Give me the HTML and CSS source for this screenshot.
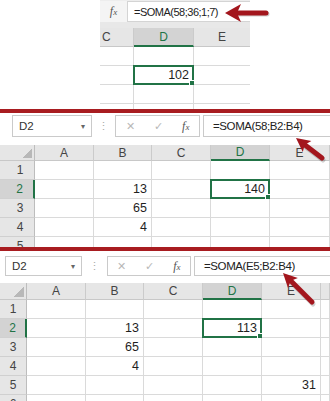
FILE: index.html
```html
<!DOCTYPE html>
<html lang="pt">
<head>
    <meta charset="UTF-8">
    <title>SOMA no Excel</title>
    <link rel="stylesheet" href="styles.css">
</head>
<body>
<div class="shot shot-one">
    <div class="mini">
        <div class="fbar">
            <div class="fx-box"><span class="fx">f<small>x</small></span></div>
            <div class="finput">=SOMA(58;36;1;7)</div>
        </div>
        <div class="mini-grid">
            <div class="hd">C</div>
            <div class="hd sel">D</div>
            <div class="hd last">E</div>
            <div class="c"></div><div class="c"></div><div class="c last"></div>
            <div class="c"></div><div class="c num active">102</div><div class="c last"></div>
            <div class="c"></div><div class="c"></div><div class="c last"></div>
            <div class="c"></div><div class="c"></div><div class="c last"></div>
        </div>
    </div>
    <svg class="arrow" viewBox="0 0 330 109" width="330" height="109">
        <line x1="238" y1="14" x2="267" y2="14" class="shade"/>
        <line x1="236" y1="13" x2="266" y2="13"/>
        <polygon points="225,13 241,4 237,13 241,22"/>
    </svg>
</div>
<div class="rule"></div>
<div class="shot shot-two">
    <div class="toolbar">
        <div class="namebox"><span>D2</span><span class="drop">&#9662;</span></div>
        <div class="dots">&#8942;</div>
        <div class="btns">
            <span class="x">&#10005;</span>
            <span class="ok">&#10003;</span>
            <span class="fx">f<small>x</small></span>
        </div>
        <div class="finput">=SOMA(58;B2:B4)</div>
    </div>
    <div class="sheet">
        <div class="corner"></div><div class="hd">A</div><div class="hd">B</div><div class="hd">C</div><div class="hd sel">D</div><div class="hd">E</div>
        <div class="rh">1</div><div class="c"></div><div class="c"></div><div class="c"></div><div class="c"></div><div class="c"></div>
        <div class="rh sel">2</div><div class="c"></div><div class="c num">13</div><div class="c"></div><div class="c num active">140</div><div class="c"></div>
        <div class="rh">3</div><div class="c"></div><div class="c num">65</div><div class="c"></div><div class="c"></div><div class="c"></div>
        <div class="rh">4</div><div class="c"></div><div class="c num">4</div><div class="c"></div><div class="c"></div><div class="c"></div>
        <div class="rh">5</div><div class="c"></div><div class="c"></div><div class="c"></div><div class="c"></div><div class="c"></div>
    </div>
    <svg class="arrow" viewBox="0 0 330 134" width="330" height="134">
        <line x1="306" y1="34" x2="323" y2="47" class="shade"/>
        <line x1="305" y1="32" x2="322" y2="45"/>
        <polygon points="296,25 311.4,28 304.7,31.7 302.8,39"/>
    </svg>
</div>
<div class="rule"></div>
<div class="shot shot-three">
    <div class="toolbar">
        <div class="namebox"><span>D2</span><span class="drop">&#9662;</span></div>
        <div class="dots">&#8942;</div>
        <div class="btns">
            <span class="x">&#10005;</span>
            <span class="ok">&#10003;</span>
            <span class="fx">f<small>x</small></span>
        </div>
        <div class="finput">=SOMA(E5;B2:B4)</div>
    </div>
    <div class="sheet">
        <div class="corner"></div><div class="hd">A</div><div class="hd">B</div><div class="hd">C</div><div class="hd sel">D</div><div class="hd">E</div><div class="hd"></div>
        <div class="rh">1</div><div class="c"></div><div class="c"></div><div class="c"></div><div class="c"></div><div class="c"></div><div class="c"></div>
        <div class="rh sel">2</div><div class="c"></div><div class="c num">13</div><div class="c"></div><div class="c num active">113</div><div class="c"></div><div class="c"></div>
        <div class="rh">3</div><div class="c"></div><div class="c num">65</div><div class="c"></div><div class="c"></div><div class="c"></div><div class="c"></div>
        <div class="rh">4</div><div class="c"></div><div class="c num">4</div><div class="c"></div><div class="c"></div><div class="c"></div><div class="c"></div>
        <div class="rh">5</div><div class="c"></div><div class="c"></div><div class="c"></div><div class="c"></div><div class="c num">31</div><div class="c"></div>
        <div class="rh">6</div><div class="c"></div><div class="c"></div><div class="c"></div><div class="c"></div><div class="c"></div><div class="c"></div>
    </div>
    <svg class="arrow" viewBox="0 0 330 150" width="330" height="150">
        <line x1="292" y1="32" x2="313" y2="53" class="shade"/>
        <line x1="291" y1="30" x2="312" y2="51"/>
        <polygon points="283,22 297.9,27 290.8,29.8 288,36.9"/>
    </svg>
</div>
</body>
</html>
```

FILE: styles.css
```css
* {
    margin: 0;
    padding: 0;
    box-sizing: border-box;
}
body {
    width: 330px;
    height: 401px;
    overflow: hidden;
    background: #fff;
    color: #222;
    font-family: "Liberation Sans", Arial, sans-serif;
    font-size: 11px;
}
.shot {
    position: relative;
    overflow: hidden;
}
.shot-one {
    height: 109px;
}
.shot-two {
    height: 134px;
}
.shot-three {
    height: 150px;
}
.rule {
    height: 4px;
    background: #a81c20;
}

/* pequeno recorte de cima */
.mini {
    margin-left: 100px;
    width: 150px;
}
.fbar {
    display: flex;
    height: 22px;
    padding-top: 1px;
    background: #ededed;
}
.fx-box {
    width: 27px;
    display: flex;
    align-items: center;
    justify-content: center;
    background: #f4f4f4;
}
.fx {
    font-family: "Liberation Serif", serif;
    font-style: italic;
    font-size: 12px;
    color: #555;
}
.fx small {
    font-size: 9px;
}
.finput {
    flex: 1;
    display: flex;
    align-items: center;
    padding-left: 8px;
    background: #fff;
    border: 1px solid #d4d4d4;
    border-right: none;
    font-size: 11.5px;
    letter-spacing: -0.4px;
    color: #222;
}
.fbar .finput {
    padding-left: 6px;
    font-size: 11px;
    letter-spacing: -0.5px;
}
.mini-grid {
    display: grid;
    grid-template-columns: 34px 60px 56px;
    grid-template-rows: 19px repeat(4, 19px);
    padding-top: 6px;
    background: linear-gradient(#e8e8e8 25px, #fff 25px);
}

.hd {
    display: flex;
    align-items: center;
    justify-content: center;
    background: #e6e6e6;
    border-right: 1px solid #cbcbcb;
    border-bottom: 1px solid #c8c8c8;
    color: #444;
    font-size: 12px;
}
.mini-grid .hd:first-child {
    justify-content: flex-start;
    padding-left: 2px;
}
.hd.last,
.c.last {
    border-right: none;
}
.hd.sel {
    background: #d3d3d3;
    color: #217346;
    border-bottom: 2px solid #217346;
}
.c {
    position: relative;
    border-right: 1px solid #dadada;
    border-bottom: 1px solid #dadada;
    background: #fff;
}
.num {
    display: flex;
    align-items: center;
    justify-content: flex-end;
    padding-right: 4px;
    font-size: 12.5px;
    color: #1f1f1f;
}
.active::before {
    content: "";
    position: absolute;
    top: -1px;
    left: -1px;
    right: -1px;
    bottom: -1px;
    border: 2px solid #217346;
}
.active::after {
    content: "";
    position: absolute;
    right: -3px;
    bottom: -3px;
    width: 5px;
    height: 5px;
    background: #217346;
    border: 1px solid #fff;
}

/* barra de fórmulas */
.toolbar {
    display: flex;
    align-items: stretch;
    height: 24px;
    padding-top: 2px;
    background: #fff;
}
.namebox {
    display: flex;
    align-items: center;
    justify-content: space-between;
    border: 1px solid #cacaca;
    padding: 0 6px;
    font-size: 11.5px;
    color: #333;
}
.drop {
    font-size: 8px;
    color: #666;
}
.dots {
    display: flex;
    align-items: center;
    justify-content: center;
    color: #aaa;
    font-size: 11px;
}
.btns {
    display: flex;
    align-items: center;
    justify-content: space-around;
    border: 1px solid #cacaca;
    color: #b8b8b8;
    font-size: 11px;
}
.btns .fx {
    color: #555;
}
.toolbar .finput {
    margin-left: 3px;
    border-color: #cacaca;
    padding-left: 9px;
}

.sheet {
    display: grid;
}
.shot-two .namebox {
    margin-left: 12px;
    width: 80px;
}
.shot-two .dots {
    width: 23px;
}
.shot-two .btns {
    width: 85px;
}
.shot-two .sheet {
    margin-top: 8px;
    grid-template-columns: 35px 59px 58px 59px 59px 1fr;
    grid-template-rows: 16px repeat(5, 19px);
}
.shot-three .toolbar {
    padding-top: 5px;
    height: 25px;
}
.shot-three .namebox {
    margin-left: 5px;
    width: 77px;
}
.shot-three .dots {
    width: 25px;
}
.shot-three .btns {
    width: 84px;
}
.shot-three .sheet {
    margin-top: 7px;
    grid-template-columns: 27px 59px 58px 59px 59px 59px 1fr;
    grid-template-rows: 17px repeat(6, 19px);
}
.corner {
    background: #e6e6e6 linear-gradient(to bottom right, transparent 50%, #b8b8b8 50%) no-repeat right 2px bottom 2px / 10px 10px;
    border-right: 1px solid #bdbdbd;
    border-bottom: 1px solid #c8c8c8;
}
.rh {
    display: flex;
    align-items: center;
    justify-content: center;
    background: #e6e6e6;
    border-right: 1px solid #bdbdbd;
    border-bottom: 1px solid #d0d0d0;
    color: #444;
    font-size: 12px;
}
.shot-two .rh {
    padding-left: 6px;
}
.rh.sel {
    background: #d3d3d3;
    color: #217346;
    border-right: 2px solid #217346;
}

.arrow {
    position: absolute;
    top: 0;
    left: 0;
    pointer-events: none;
}
.arrow line {
    stroke: #a3161d;
    stroke-width: 5;
    stroke-linecap: round;
}
.arrow line.shade {
    stroke: rgba(0, 0, 0, 0.18);
}
.arrow polygon {
    fill: #a3161d;
}
```
